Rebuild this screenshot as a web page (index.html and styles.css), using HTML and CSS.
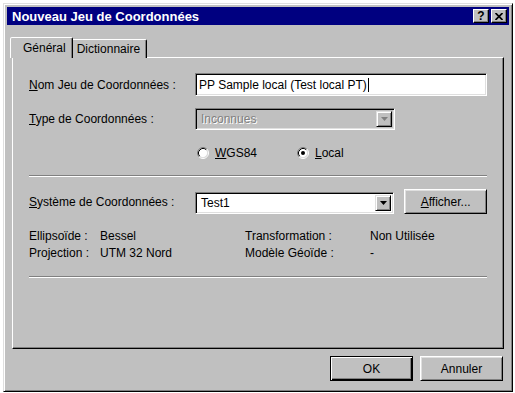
FILE: index.html
```html
<!DOCTYPE html>
<html lang="fr">
<head>
<meta charset="utf-8">
<title>Nouveau Jeu de Coordonnées</title>
<link rel="stylesheet" href="styles.css">
</head>
<body>
<div class="window">
  <div class="titlebar">
    <span class="title">Nouveau Jeu de Coordonnées</span>
    <div class="tb-buttons">
      <div class="tb-btn"><span class="q">?</span></div>
      <div class="tb-btn">
        <svg width="8" height="7" viewBox="0 0 8 7"><path d="M0.5 0 L7.5 7 M7.5 0 L0.5 7" stroke="#000" stroke-width="1.7" fill="none"/></svg>
      </div>
    </div>
  </div>
  <div class="main">
    <div class="tabs">
      <div class="tab active">Général</div>
      <div class="tab">Dictionnaire</div>
    </div>
    <div class="panel">
      <div class="row row-nom">
        <span class="label"><u>N</u>om Jeu de Coordonnées :</span>
        <div class="edit"><span class="edit-text">PP Sample local (Test local PT)</span><span class="caret"></span></div>
      </div>
      <div class="row row-type">
        <span class="label"><u>T</u>ype de Coordonnées :</span>
        <div class="combo disabled">
          <span class="combo-text">Inconnues</span>
          <div class="combo-btn"><svg width="7" height="4" viewBox="0 0 7 4"><polygon points="0,0 7,0 3.5,4" fill="#808080"/></svg></div>
        </div>
      </div>
      <div class="row row-radio">
        <span class="label"></span>
        <label class="radio">
          <svg class="radio-dot" width="12" height="12" viewBox="0 0 12 12">
            <circle cx="6" cy="6" r="4.5" fill="#fff"/>
            <path d="M2.11 9.89 A5.5 5.5 0 0 1 9.89 2.11" stroke="#808080" fill="none"/>
            <path d="M9.89 2.11 A5.5 5.5 0 0 1 2.11 9.89" stroke="#fff" fill="none"/>
            <path d="M2.82 9.18 A4.5 4.5 0 0 1 9.18 2.82" stroke="#000" fill="none"/>
            <path d="M9.18 2.82 A4.5 4.5 0 0 1 2.82 9.18" stroke="#dfdfdf" fill="none"/>
          </svg>
          <span><u>W</u>GS84</span>
        </label>
        <label class="radio">
          <svg class="radio-dot" width="12" height="12" viewBox="0 0 12 12">
            <circle cx="6" cy="6" r="4.5" fill="#fff"/>
            <path d="M2.11 9.89 A5.5 5.5 0 0 1 9.89 2.11" stroke="#808080" fill="none"/>
            <path d="M9.89 2.11 A5.5 5.5 0 0 1 2.11 9.89" stroke="#fff" fill="none"/>
            <path d="M2.82 9.18 A4.5 4.5 0 0 1 9.18 2.82" stroke="#000" fill="none"/>
            <path d="M9.18 2.82 A4.5 4.5 0 0 1 2.82 9.18" stroke="#dfdfdf" fill="none"/>
            <circle cx="6" cy="6" r="2" fill="#000"/>
          </svg>
          <span><u>L</u>ocal</span>
        </label>
      </div>
      <div class="sep sep1"></div>
      <div class="row row-sys">
        <span class="label"><u>S</u>ystème de Coordonnées :</span>
        <div class="combo">
          <span class="combo-text">Test1</span>
          <div class="combo-btn"><svg width="7" height="4" viewBox="0 0 7 4"><polygon points="0,0 7,0 3.5,4" fill="#000"/></svg></div>
        </div>
        <div class="button btn-aff"><span><u>A</u>fficher...</span></div>
      </div>
      <div class="info">
        <span class="k">Ellipsoïde :</span><span class="v">Bessel</span><span class="k2">Transformation :</span><span class="v2">Non Utilisée</span>
        <span class="k">Projection :</span><span class="v">UTM 32 Nord</span><span class="k2">Modèle Géoïde :</span><span class="v2">-</span>
      </div>
      <div class="sep sep2"></div>
    </div>
    <div class="footer">
      <div class="button default"><span>OK</span></div>
      <div class="button"><span>Annuler</span></div>
    </div>
  </div>
</div>
</body>
</html>
```

FILE: styles.css
```css
* { box-sizing: border-box; }
body {
  margin: 0;
  background: #fff;
  font-family: "Liberation Sans", Arial, sans-serif;
  font-size: 12px;
  color: #000;
}
.window {
  margin: 3px 0 0 3px;
  width: 510px;
  height: 389px;
  background: #c0c0c0;
  border: 1px solid;
  border-color: #dfdfdf #000 #000 #dfdfdf;
  box-shadow: inset 1px 1px #fff, inset -1px -1px #808080;
  padding: 3px;
  display: flex;
  flex-direction: column;
}
.titlebar {
  height: 18px;
  background: #000080;
  display: flex;
  align-items: center;
  justify-content: space-between;
  padding: 0 2px 0 5px;
}
.title {
  color: #fff;
  font-weight: bold;
  font-size: 13px;
}
.tb-buttons { display: flex; gap: 2px; }
.tb-btn {
  width: 16px;
  height: 14px;
  background: #c0c0c0;
  border: 1px solid;
  border-color: #fff #000 #000 #fff;
  box-shadow: inset -1px -1px #808080;
  display: flex;
  align-items: center;
  justify-content: center;
}
.q { font-weight: bold; font-size: 12px; line-height: 12px; }
.main {
  padding: 12px 5px 0 5px;
  display: flex;
  flex-direction: column;
}
.tabs {
  display: flex;
  align-items: flex-end;
  height: 21px;
  margin-bottom: -1px;
  position: relative;
  z-index: 1;
}
.tab {
  height: 19px;
  padding: 0 6px;
  border: 1px solid;
  border-bottom: none;
  border-color: #fff #000 transparent #fff;
  box-shadow: inset -1px 0 #808080;
  border-radius: 2px 2px 0 0;
  background: #c0c0c0;
  display: flex;
  align-items: center;
}
.tab.active {
  height: 21px;
  margin: 0 -2px 0 -2px;
  padding: 0 6px 1px 12px;
  position: relative;
  z-index: 2;
}
.tab.active + .tab { margin-left: 0; padding-left: 5px; width: 76px; }
.panel {
  height: 292px;
  border: 1px solid;
  border-color: #fff #000 #000 #fff;
  box-shadow: inset -1px -1px #808080;
  padding: 15px 16px 0 16px;
}
.row {
  display: flex;
  align-items: center;
}
.label { width: 166px; flex: none; }
.edit {
  width: 292px;
  height: 23px;
  background: #fff;
  border: 1px solid;
  border-color: #808080 #fff #fff #808080;
  box-shadow: inset 1px 1px #000, inset -1px -1px #dfdfdf;
  display: flex;
  align-items: center;
  padding-left: 3px;
}
.caret { width: 1px; height: 14px; background: #000; margin-left: 1px; }
.row-type { margin-top: 12px; }
.combo {
  width: 200px;
  height: 22px;
  background: #fff;
  border: 1px solid;
  border-color: #808080 #fff #fff #808080;
  box-shadow: inset 1px 1px #000, inset -1px -1px #dfdfdf;
  display: flex;
  align-items: center;
  justify-content: space-between;
  padding: 2px 2px 2px 5px;
}
.combo.disabled { background: #c0c0c0; }
.combo.disabled .combo-text { color: #808080; text-shadow: 1px 1px #fff; }
.combo-btn {
  width: 16px;
  height: 16px;
  background: #c0c0c0;
  border: 1px solid;
  border-color: #dfdfdf #000 #000 #dfdfdf;
  box-shadow: inset 1px 1px #fff, inset -1px -1px #808080;
  display: flex;
  align-items: center;
  justify-content: center;
}
.row-radio { margin-top: 15px; height: 16px; }
.radio { display: flex; align-items: center; gap: 6px; }
.radio:first-of-type { margin-left: 2px; width: 100px; }
.radio-dot { flex: none; }
.sep {
  height: 2px;
  border-top: 1px solid #808080;
  border-bottom: 1px solid #fff;
  width: 458px;
}
.sep1 { margin-top: 14px; }
.row-sys { margin-top: 12px; height: 25px; align-items: flex-end; }
.row-sys .label { align-self: center; }
.button {
  width: 83px;
  height: 25px;
  background: #c0c0c0;
  border: 1px solid;
  border-color: #fff #000 #000 #fff;
  box-shadow: inset 1px 1px #dfdfdf, inset -1px -1px #808080;
  display: flex;
  align-items: center;
  justify-content: center;
}
.btn-aff { margin-left: 10px; }
.info {
  margin-top: 14px;
  display: grid;
  grid-template-columns: 71px 145px 125px auto;
  line-height: 17px;
}
.sep2 { margin-top: 14px; }
.footer {
  display: flex;
  justify-content: flex-end;
  gap: 7px;
  margin-top: 7px;
  padding-right: 1px;
}
.button.default {
  border: 1px solid #000;
  box-shadow: inset 1px 1px #fff, inset -1px -1px #000, inset -2px -2px #808080;
}
```
